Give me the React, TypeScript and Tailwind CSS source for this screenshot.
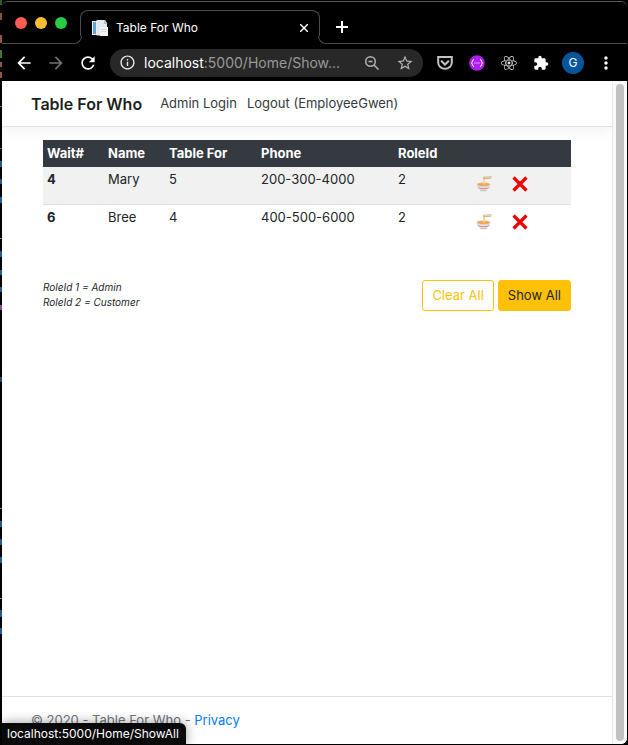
import { FaReact } from "react-icons/fa";
import {
  MdArrowBack,
  MdArrowForward,
  MdExtension,
  MdInfoOutline,
  MdMoreVert,
  MdRefresh,
  MdStarBorder,
} from "react-icons/md";

const guests = [
  { wait: 4, name: "Mary", party: 5, phone: "200-300-4000", role: 2 },
  { wait: 6, name: "Bree", party: 4, phone: "400-500-6000", role: 2 },
];

// Bits of the code editor behind the window: top, bottom, colour.
const editorMarks: [number, number, string][] = [
  [0, 5, "#315c25"],
  [13, 20, "#8a4f3c"],
  [35, 43, "#8a5a45"],
  [50, 58, "#3c7a2c"],
  [62, 67, "#8a5a45"],
  [72, 78, "#8a5a45"],
  [106, 107, "#2a9a8a"],
  [148, 149, "#3a7fa8"],
  [161, 167, "#1f5c92"],
  [179, 184, "#1f5c92"],
  [197, 203, "#1f5c92"],
  [238, 239, "#3a8fc8"],
  [251, 257, "#1f5c92"],
  [270, 275, "#1f5c92"],
  [287, 292, "#1f5c92"],
  [305, 310, "#8a4a85"],
  [377, 382, "#1b4468"],
  [508, 509, "#3a8fc8"],
  [521, 527, "#1f5c92"],
  [539, 545, "#1f5c92"],
  [557, 563, "#1f5c92"],
  [598, 599, "#3a8fc8"],
  [610, 617, "#1f5c92"],
  [628, 634, "#1f5c92"],
];

const editorGradient = `linear-gradient(to bottom, ${editorMarks
  .map(([a, b, c]) => `#000 ${a}px, ${c} ${a}px, ${c} ${b}px, #000 ${b}px`)
  .join(", ")})`;

function DocIcon() {
  return (
    <svg width="16" height="16" viewBox="0 0 16 16" aria-hidden="true">
      <path d="M0 1h6v14H0z" fill="#eef3f8" />
      <path d="M1 2h3v12H1z" fill="#5aa6dc" />
      <path d="M4.500 0h8.500l2 3v12.500H4.500z" fill="#e3e9f0" />
      <path d="M12 0v4h3.500z" fill="#b3c0ce" />
      <path d="M8 7h8v9H8z" fill="#f5f5f5" />
      <path d="M9 9.500h5M9 11.500h5" stroke="#d3d9df" />
    </svg>
  );
}

function ZoomOutIcon() {
  return (
    <svg width="16" height="16" viewBox="0 0 16 16" fill="none" stroke="#b4b4b4" strokeWidth="1.5" aria-hidden="true">
      <circle cx="6.5" cy="6.5" r="4.75" />
      <path d="M4.5 6.5h4M10 10l4.5 4.5" />
    </svg>
  );
}

function PocketIcon() {
  return (
    <svg width="16" height="16" viewBox="0 0 16 16" fill="none" stroke="#c2c2c2" strokeWidth="2" aria-hidden="true">
      <path d="M1.2 2h13.6v5.5a6.8 6.3 0 0 1-13.6 0z" />
      <path d="M4.6 6.2 8 9.5l3.4-3.3" strokeLinecap="round" />
    </svg>
  );
}

function BracesIcon() {
  return (
    <svg width="16" height="16" viewBox="0 0 16 16" aria-hidden="true">
      <circle cx="8" cy="8" r="7.8" fill="#b01ef0" />
      <g fill="none" stroke="#fff" strokeWidth="1">
        <path d="M5 4.500c-2 0-1 2.500-2.500 3.500C4 9 3 11.500 5 11.500M11 4.500c2 0 1 2.500 2.500 3.500-1.500 1-.5 3.500-2.500 3.500" />
        <path d="M5.500 8h1M7.500 8h1M9.500 8h1" />
      </g>
    </svg>
  );
}

function NoodleIcon() {
  return (
    <svg width="16" height="16" viewBox="0 0 16 16" aria-hidden="true">
      <ellipse cx="7.500" cy="14.300" rx="3.500" ry="1" fill="#b9b9b9" />
      <path d="M.5 8.500C1 12.500 4 14.500 7.500 14.500s6.500-2 7-6z" fill="#e5e0dd" />
      <path d="M1.500 11c3 1.600 9 1.600 12 0l-1.300 1.500c-3 1-6.400 1-9.400 0z" fill="#d98680" />
      <ellipse cx="7.500" cy="8.500" rx="7" ry="2.200" fill="#d9cfc8" />
      <ellipse cx="7.500" cy="8.500" rx="5.900" ry="1.600" fill="#f0a552" />
      <path d="M7.500 1.500v7M8.600 2v6.500" stroke="#f0d88e" strokeWidth=".9" />
      <path d="M7 1.300 15.500.8M7 2.800l8.500-.7" stroke="#c9a873" strokeWidth=".9" />
    </svg>
  );
}

function CrossIcon() {
  return (
    <svg width="16" height="16" viewBox="0 0 16 16" aria-hidden="true">
      <path d="M1.500 1.500 14.500 14.500M14.500 1.500 1.500 14.500" stroke="#ee0505" strokeWidth="3.200" />
    </svg>
  );
}

function TabStrip() {
  return (
    <div className="flex h-[42px] items-end">
      <div className="flex h-full w-[78px] shrink-0 items-center gap-2 border-b border-[#4c4c4c] pl-[13px]">
        <button aria-label="Close window" className="size-3 rounded-full bg-[#ff5b52]" />
        <button aria-label="Minimize window" className="size-3 rounded-full bg-[#fdbc31]" />
        <button aria-label="Zoom window" className="size-3 rounded-full bg-[#29cc42]" />
      </div>
      <div className="relative flex h-[34px] w-[240px] shrink-0 items-center rounded-t-lg border-x border-t border-[#4c4c4c] pl-[11px] pr-[7px] text-xs text-white">
        <span className="absolute -left-2 bottom-0 h-2 w-[9px] bg-black">
          <span className="block size-full rounded-br-lg border-b border-r border-[#4c4c4c]" />
        </span>
        <span className="absolute -right-2 bottom-0 h-2 w-[9px] bg-black">
          <span className="block size-full rounded-bl-lg border-b border-l border-[#4c4c4c]" />
        </span>
        <DocIcon />
        <span className="ml-2 flex-1">Table For Who</span>
        <button aria-label="Close tab" className="flex size-4 items-center justify-center">
          <svg width="8" height="8" viewBox="0 0 8 8" stroke="#fff" strokeWidth="1.500">
            <path d="m0 0 8 8M8 0 0 8" />
          </svg>
        </button>
      </div>
      <div className="flex h-full flex-1 items-center border-b border-[#4c4c4c] pl-4 pt-2">
        <button aria-label="New tab">
          <svg width="12" height="12" viewBox="0 0 12 12" stroke="#fff" strokeWidth="2" className="block">
            <path d="M0 6h12M6 0v12" />
          </svg>
        </button>
      </div>
    </div>
  );
}

function Toolbar() {
  return (
    <div className="flex h-[37px] items-center pr-[11px] text-white">
      <button aria-label="Back" className="ml-3"><MdArrowBack size={20} /></button>
      <button aria-label="Forward" className="ml-3 text-[#707070]"><MdArrowForward size={20} /></button>
      <button aria-label="Reload" className="ml-3"><MdRefresh size={20} /></button>
      <div className="ml-3 flex h-7 min-w-0 flex-1 items-center rounded-full bg-[#282828] px-[9px]">
        <MdInfoOutline size={17} className="shrink-0 text-[#e8e8e8]" />
        <span className="ml-2 min-w-0 flex-1 whitespace-nowrap text-sm text-[#9a9a9a]">
          <span className="text-white">localhost</span>:5000/Home/Show...
        </span>
        <button aria-label="Zoom" className="mr-4"><ZoomOutIcon /></button>
        <button aria-label="Bookmark" className="text-[#b4b4b4]"><MdStarBorder size={18} /></button>
      </div>
      <button aria-label="Pocket" className="ml-[14px]"><PocketIcon /></button>
      <button aria-label="JSON viewer" className="ml-4"><BracesIcon /></button>
      <button aria-label="React tools" className="ml-4 text-[#dedede]"><FaReact size={16} /></button>
      <button aria-label="Extensions" className="ml-4"><MdExtension size={16} /></button>
      <button aria-label="Profile" className="ml-[13px] size-[22px] rounded-full bg-[#04569c] text-xs">G</button>
      <button aria-label="Menu" className="ml-3"><MdMoreVert size={20} /></button>
    </div>
  );
}

function WaitTable() {
  return (
    <table className="w-full table-fixed border-collapse text-left text-[13px] leading-5 text-[#212529]">
      <colgroup>
        <col className="w-[61px]" />
        <col className="w-[61px]" />
        <col className="w-[92px]" />
        <col className="w-[137px]" />
        <col className="w-[77px]" />
        <col />
      </colgroup>
      <thead className="bg-[#343a40] text-white">
        <tr className="h-[27px]">
          <th className="px-1 pb-[2px]">Wait#</th>
          <th className="px-1 pb-[2px]">Name</th>
          <th className="px-1 pb-[2px]">Table For</th>
          <th className="px-1 pb-[2px]">Phone</th>
          <th className="px-1 pb-[2px]">RoleId</th>
          <th className="px-1 pb-[2px]" aria-label="Actions" />
        </tr>
      </thead>
      <tbody>
        {guests.map((g) => (
          <tr key={g.wait} className="h-[37px] border-b border-[#dee2e6] align-top odd:bg-[#f1f1f1] last:border-b-0">
            <th scope="row" className="px-1 pt-[2px]">{g.wait}</th>
            <td className="px-1 pt-[2px]">{g.name}</td>
            <td className="px-1 pt-[2px]">{g.party}</td>
            <td className="px-1 pt-[2px]">{g.phone}</td>
            <td className="px-1 pt-[2px]">{g.role}</td>
            <td className="pl-[5px] pt-[9px]">
              <div className="flex gap-5">
                <button aria-label={`Seat ${g.name}`}><NoodleIcon /></button>
                <button aria-label={`Remove ${g.name}`}><CrossIcon /></button>
              </div>
            </td>
          </tr>
        ))}
      </tbody>
    </table>
  );
}

export default function App() {
  return (
    <div className="relative flex h-screen bg-black pr-px font-['Inter','Liberation_Sans',sans-serif]">
      <div className="w-[2px] shrink-0" style={{ backgroundImage: editorGradient }} />
      <div className="flex min-w-0 flex-1 flex-col py-px">
        <header className="rounded-t-md border-t border-[#5a5a5a]">
          <TabStrip />
          <Toolbar />
        </header>
        <div className="flex min-h-0 flex-1 rounded-br-md bg-white">
          <div className="flex min-w-0 flex-1 flex-col">
            <nav className="flex h-[46px] shrink-0 items-center border-b border-[#dee2e6] px-[29px] text-[13px] text-[#343a40] shadow-[0_4px_12px_rgba(0,0,0,0.05)]">
              <a href="#home" className="text-base font-semibold text-[#1d1f21]">Table For Who</a>
              <a href="#login" className="ml-[18px]">Admin Login</a>
              <a href="#logout" className="ml-[10px]">Logout (EmployeeGwen)</a>
            </nav>
            <main className="flex-1 px-[41px] pt-[13px]">
              <WaitTable />
              <div className="mt-[39px] flex justify-between">
                <p className="text-[10px] italic leading-[15px] text-[#212529]">
                  RoleId 1 = Admin
                  <br />
                  RoleId 2 = Customer
                </p>
                <div className="flex gap-1 text-[13px]">
                  <button className="h-[31px] rounded-[3px] border border-[#ffc107] px-[9px] text-[#ffc107]">Clear All</button>
                  <button className="h-[31px] rounded-[3px] border border-[#ffc107] bg-[#ffc107] px-[9px] text-[#212529]">Show All</button>
                </div>
              </div>
            </main>
            <footer className="h-12 shrink-0 border-t border-[#dee2e6] px-[29px] text-[13px] leading-[47px] text-[#6c757d]">
              © 2020 - Table For Who - <a href="#privacy" className="text-[#007bff]">Privacy</a>
            </footer>
          </div>
          <div className="w-[15px] shrink-0 rounded-br-md border-l border-[#e8e8e8] bg-[#fafafa] py-[3px] pl-[3px]">
            <div className="h-full w-2 rounded-full bg-[#c1c1c1]" />
          </div>
        </div>
      </div>
      <div className="absolute bottom-0 left-[2px] h-[22px] rounded-tr-md bg-[#0a0a0a] pl-[5px] pr-[7px] text-xs leading-[22px] text-white shadow-[0_0_12px_rgba(0,0,0,0.4)]">
        localhost:5000/Home/ShowAll
      </div>
    </div>
  );
}
